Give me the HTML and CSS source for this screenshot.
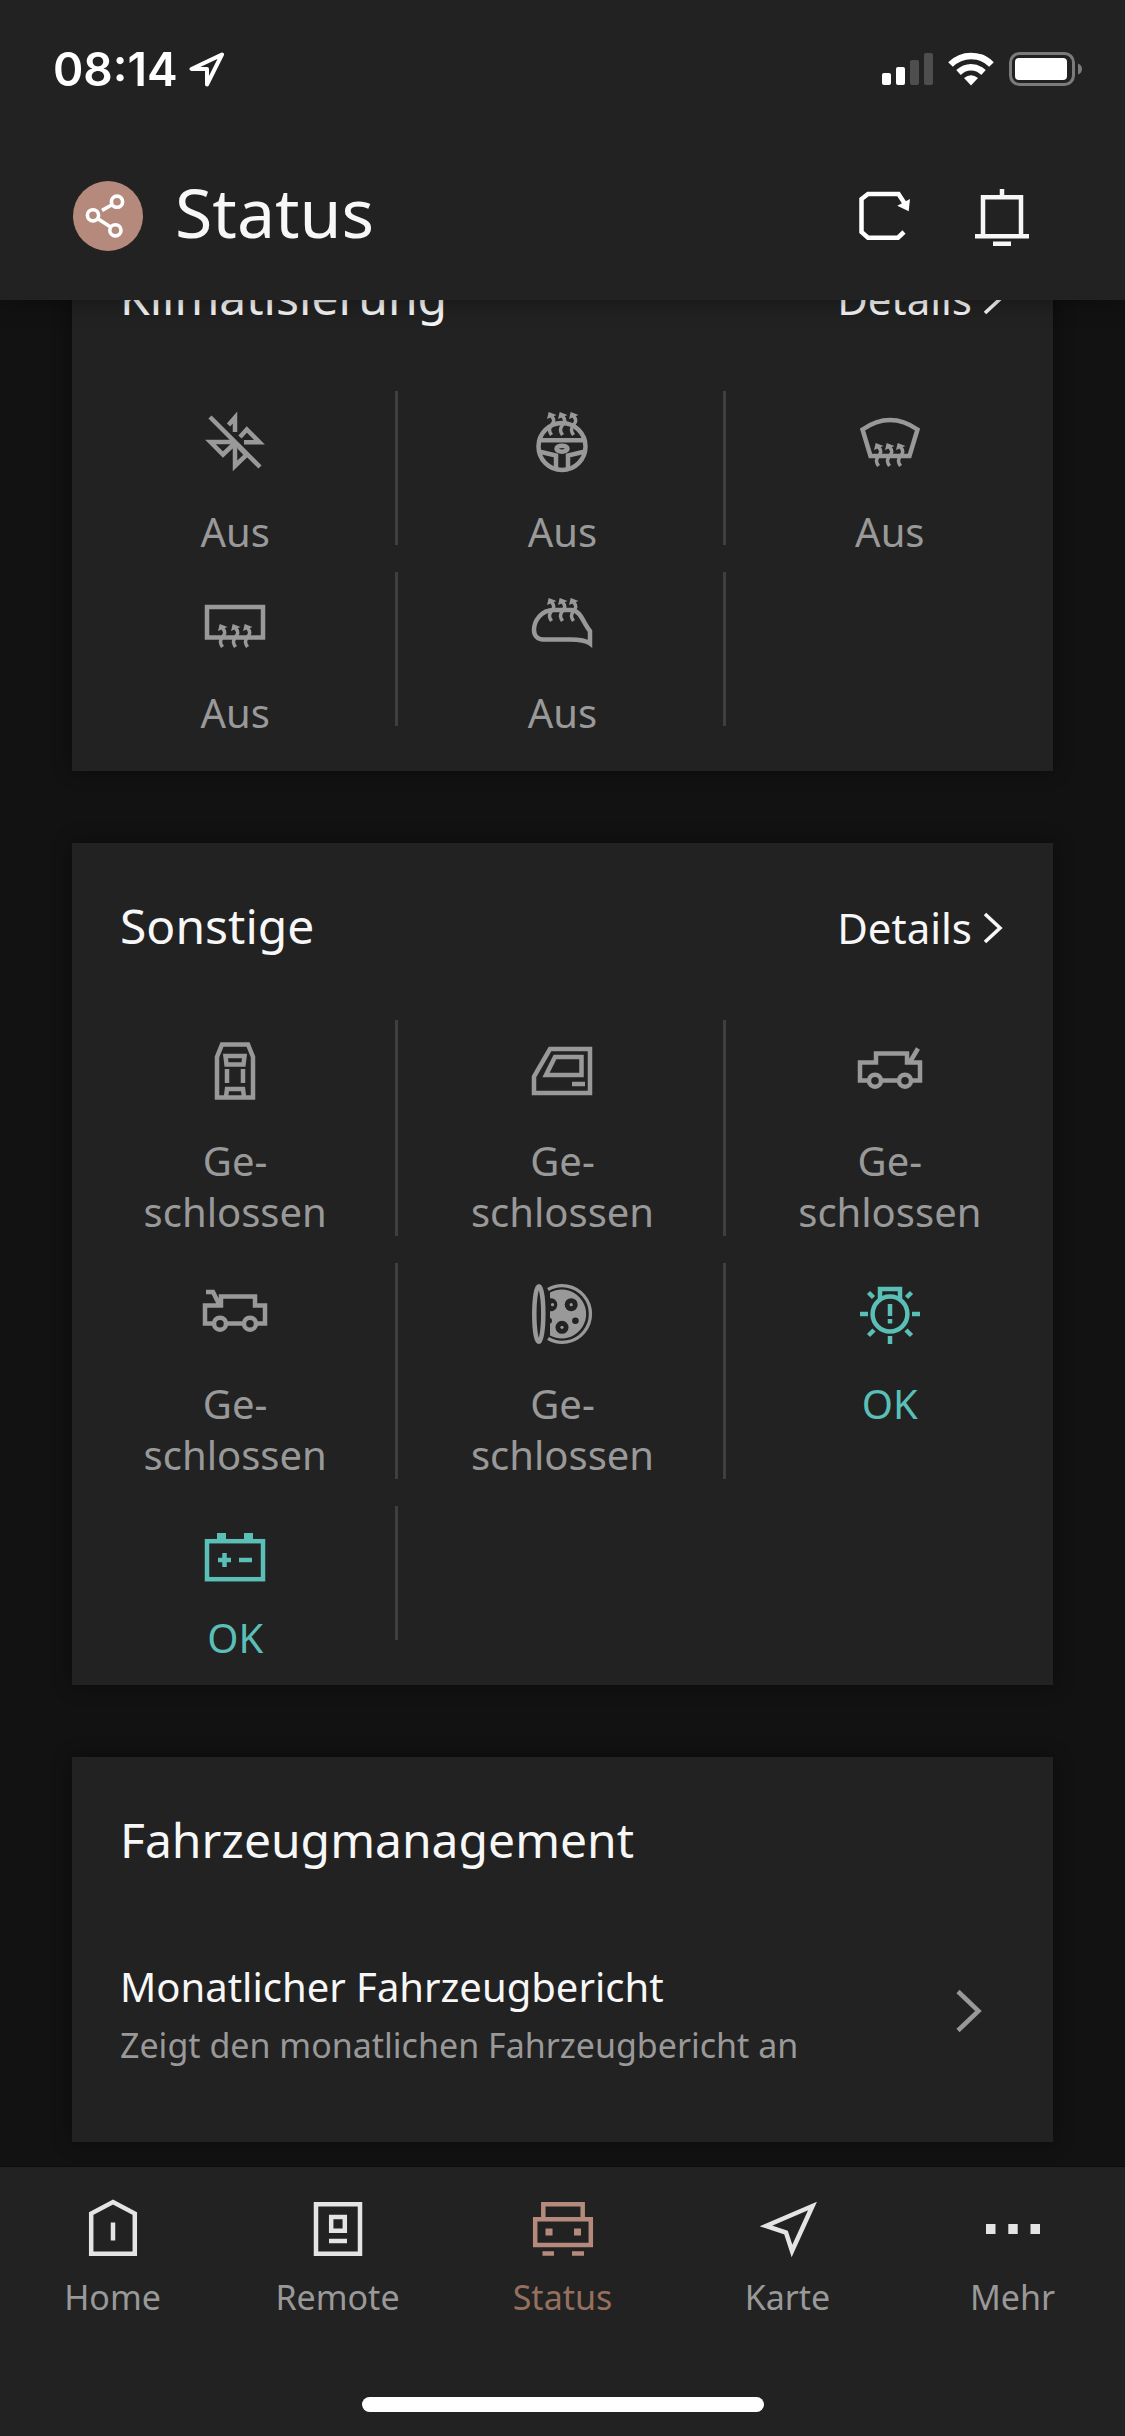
FILE: index.html
```html
<!DOCTYPE html>
<html lang="de">
<head>
  <meta charset="UTF-8">
  <meta name="viewport" content="width=device-width">
  <title>Status</title>
  <link rel="stylesheet" href="styles.css">
</head>
<body>
  <!-- shared shapes -->
  <svg class="defs" aria-hidden="true">
    <symbol id="heat" viewBox="0 0 10 23" overflow="visible">
      <path d="M1.7 0L9.5 3L0 7Z" fill="currentColor" stroke="none"/>
      <path d="M4.5 4C8 8 7 10 4.5 13C1.5 17 2 19 4.5 23" fill="none" stroke="currentColor" stroke-width="3.5"/>
    </symbol>
    <symbol id="chevron" viewBox="0 0 24 36">
      <path d="M4 4L19 18L4 32" fill="none" stroke="currentColor" stroke-width="3.6"/>
    </symbol>
  </svg>

  <header class="header">
    <div class="statusbar">
      <span class="time">08:14</span>
      <svg width="36" height="36" viewBox="0 0 36 36"><path d="M34 3.500L3.500 18H19V33.500Z" fill="none" stroke="#fff" stroke-width="4" stroke-linejoin="round"/></svg>
      <div class="indicators">
        <svg width="51" height="32" viewBox="0 0 51 32" fill="#fff">
          <rect y="20" width="9" height="12" rx="2"/>
          <rect x="14" y="14" width="9" height="18" rx="2"/>
          <rect x="28" y="7" width="9" height="25" rx="2" fill="#4e4e4e"/>
          <rect x="42" width="9" height="32" rx="2" fill="#4e4e4e"/>
        </svg>
        <svg width="46" height="34" viewBox="0 0 46 34">
          <path d="M2.500 12.500C14 1 32 1 43.500 12.500" fill="none" stroke="#fff" stroke-width="6.500"/>
          <path d="M10.500 20.500C18 13.500 28 13.500 35.500 20.500" fill="none" stroke="#fff" stroke-width="6.500"/>
          <path d="M16 26Q23 20.500 30 26L23 33.500Z" fill="#fff"/>
        </svg>
        <svg width="73" height="34" viewBox="0 0 73 34">
          <rect x="1.500" y="1.500" width="63" height="31" rx="9" fill="none" stroke="#7b7b7b" stroke-width="3"/>
          <rect x="6" y="6" width="52" height="22" rx="4" fill="#fff"/>
          <path d="M69 11.500Q73 13 73 17Q73 21 69 22.500Z" fill="#7b7b7b"/>
        </svg>
      </div>
    </div>
    <div class="titlebar">
      <button class="share" aria-label="Teilen">
        <svg width="70" height="70" viewBox="0 0 70 70" fill="none" stroke="#fff" stroke-width="3.600">
          <circle cx="44" cy="20.700" r="5.600"/>
          <circle cx="20" cy="34.300" r="5.600"/>
          <circle cx="42.400" cy="49.300" r="5.600"/>
          <path d="M29 29.300L39.500 23.500M24.500 37.500L38 46.300"/>
        </svg>
      </button>
      <h1>Status</h1>
      <button class="action" aria-label="Aktualisieren">
        <svg width="60" height="60" viewBox="0 0 60 60" fill="none" stroke="#fff" stroke-width="4.500">
          <path d="M49 46L43 51.700H13L6.500 46V13L13 8H43.500L50 18"/>
          <path d="M55 13L53.700 25.300L42.300 19.700Z" fill="#fff" stroke="none"/>
        </svg>
      </button>
      <button class="action" aria-label="Benachrichtigungen">
        <svg width="60" height="60" viewBox="0 0 60 60" fill="none" stroke="#f7f7f7" stroke-width="4.500">
          <path d="M30 3V10M11 50V11.300H49V50M3 50.300H57M21 57.700H39"/>
        </svg>
      </button>
    </div>
  </header>

  <main class="content">
    <section class="card">
      <div class="card-head">
        <h2>Klimatisierung</h2>
        <a class="details" href="#">Details <svg width="24" height="36"><use href="#chevron"/></svg></a>
      </div>
      <div class="tiles climate">
        <div class="tile">
          <svg class="icon" viewBox="0 0 60 60">
            <path d="M5 5L55 55M23.500 13L30 5.500V20M35 25L41.800 17.500L54.500 30.300H39M30 30H5.500L18 42.500L29 32M30 30V54L41.500 43L34 35"/>
          </svg>
          <span class="label">Aus</span>
        </div>
        <div class="tile">
          <svg class="icon" viewBox="0 0 60 60">
            <circle cx="30" cy="34.500" r="23.500"/>
            <path d="M7 28.300H53M7 39.500L24 43.500V57M53 39.500L36 43.500V57"/>
            <ellipse cx="30" cy="36.700" rx="5.500" ry="3"/>
            <use href="#heat" x="15" y="0" width="10" height="23"/>
            <use href="#heat" x="26" y="0" width="10" height="23"/>
            <use href="#heat" x="37" y="0" width="10" height="23"/>
          </svg>
          <span class="label">Aus</span>
        </div>
        <div class="tile">
          <svg class="icon" viewBox="0 0 60 60">
            <path d="M2.500 17.500Q30 -1.500 57.500 17.500L49.500 44H10.500Z"/>
            <use href="#heat" x="14" y="31" width="10" height="23"/>
            <use href="#heat" x="25" y="31" width="10" height="23"/>
            <use href="#heat" x="36" y="31" width="10" height="23"/>
          </svg>
          <span class="label">Aus</span>
        </div>
        <div class="tile">
          <svg class="icon" viewBox="0 0 60 60">
            <rect x="2" y="14" width="56" height="30.500"/>
            <use href="#heat" x="13" y="31" width="10" height="23"/>
            <use href="#heat" x="26" y="31" width="10" height="23"/>
            <use href="#heat" x="38" y="31" width="10" height="23"/>
          </svg>
          <span class="label">Aus</span>
        </div>
        <div class="tile">
          <svg class="icon" viewBox="0 0 60 60">
            <path d="M58 50.500V38C51 30 49 17 39 17H22C9 17 2 28 2 37C2 43 6 46.500 11 46.500H38C48 46.500 54 47.500 58 50.500Z"/>
            <use href="#heat" x="15" y="5" width="10" height="23"/>
            <use href="#heat" x="26" y="5" width="10" height="23"/>
            <use href="#heat" x="37" y="5" width="10" height="23"/>
          </svg>
          <span class="label">Aus</span>
        </div>
        <div class="tile"></div>
      </div>
    </section>

    <section class="card">
      <div class="card-head">
        <h2>Sonstige</h2>
        <a class="details" href="#">Details <svg width="24" height="36"><use href="#chevron"/></svg></a>
      </div>
      <div class="tiles other">
        <div class="tile">
          <svg class="icon" viewBox="0 0 60 60">
            <path d="M12 56.500V16L17 3.500H43L48 16V56.500ZM20.500 15H39.500L38.500 23.500H21.500ZM22 28V42M38 28V42M21 56L22 48H38L39 56"/>
          </svg>
          <span class="label">Ge&shy;schlossen</span>
        </div>
        <div class="tile">
          <svg class="icon" viewBox="0 0 60 60">
            <path d="M2 52V35.500L18 8H58V52ZM14 34L23 16H49.500V34ZM40 43H53"/>
          </svg>
          <span class="label">Ge&shy;schlossen</span>
        </div>
        <div class="tile">
          <svg class="icon" viewBox="0 0 60 60">
            <path d="M9 39.500H0V21.500H16V12.500H47V21.500H60V39.500H51M21 39.500H39M50 21L58 7.500"/>
            <circle cx="15" cy="39.700" r="6"/>
            <circle cx="45" cy="39.700" r="6"/>
          </svg>
          <span class="label">Ge&shy;schlossen</span>
        </div>
        <div class="tile">
          <svg class="icon" viewBox="0 0 60 60">
            <path d="M9 39.500H0V21.500H16V12.500H50V21.500H60V39.500H51M21 39.500H39M1 8H8L14.500 21"/>
            <circle cx="15" cy="39.700" r="6"/>
            <circle cx="45" cy="39.700" r="6"/>
          </svg>
          <span class="label">Ge&shy;schlossen</span>
        </div>
        <div class="tile">
          <svg class="icon" viewBox="0 0 60 60">
            <ellipse cx="6.800" cy="30" rx="4.500" ry="27.700"/>
            <path d="M16 5.500A28.300 28.300 0 1 1 16 54.500" stroke-width="3.300"/>
            <path d="M18 8.600A24.400 24.400 0 1 1 18 51.400Z" fill="currentColor" stroke="none"/>
            <g class="holes">
              <path d="M17 14.500A6.500 6.500 0 1 1 17 27Z"/>
              <circle cx="39.200" cy="20.700" r="6.500"/>
              <circle cx="30" cy="43.300" r="6.500"/>
              <circle cx="43.400" cy="36.700" r="3.300"/>
              <circle cx="17" cy="36.700" r="3"/>
            </g>
            <g fill="currentColor" stroke="none">
              <circle cx="20.500" cy="20.700" r="1.600"/>
              <circle cx="39.200" cy="20.700" r="1.600"/>
              <circle cx="30" cy="43.300" r="1.600"/>
            </g>
          </svg>
          <span class="label">Ge&shy;schlossen</span>
        </div>
        <div class="tile ok">
          <svg class="icon" viewBox="0 0 60 60">
            <circle cx="30" cy="30" r="17.400"/>
            <path d="M20 15V5H40V15M0 30H8M52 30H60M30 52V60M8.500 8.500L13.500 13.500M51.500 8.500L46.500 13.500M8.500 51.500L14 46M51.500 51.500L46 46M30 20V32M30 35V39.500"/>
          </svg>
          <span class="label">OK</span>
        </div>
        <div class="tile ok compact">
          <svg class="icon" viewBox="0 0 60 60">
            <rect x="2" y="14.200" width="56" height="38"/>
            <path d="M12 6H21V13H12ZM39 6H48V13H39Z" fill="currentColor" stroke="none"/>
            <path d="M13 33H26M19.500 26V40M34 33H47"/>
          </svg>
          <span class="label">OK</span>
        </div>
      </div>
    </section>

    <section class="card">
      <div class="card-head">
        <h2>Fahrzeugmanagement</h2>
      </div>
      <a class="report" href="#">
        <span class="report-text">
          <span class="report-title">Monatlicher Fahrzeugbericht</span>
          <span class="report-sub">Zeigt den monatlichen Fahrzeugbericht an</span>
        </span>
        <svg width="60" height="60" viewBox="0 0 60 60"><path d="M13 6.500L33.500 26L13 45.500" fill="none" stroke="currentColor" stroke-width="4.500"/></svg>
      </a>
    </section>
  </main>

  <nav class="tabbar">
    <div class="tabs">
      <a class="tab" href="#">
        <svg class="icon" viewBox="0 0 60 60"><path d="M8.200 54.700V14.500L30 3L51.800 14.500V54.700ZM30 23.500V41.500"/></svg>
        <span>Home</span>
      </a>
      <a class="tab" href="#">
        <svg class="icon" viewBox="0 0 60 60"><path d="M8 5.200H52V54.800H8ZM23.200 18H36.800V31.800H23.200ZM21 42H39"/></svg>
        <span>Remote</span>
      </a>
      <a class="tab active" href="#" aria-current="page">
        <svg class="icon" viewBox="0 0 60 60">
          <path d="M2.200 20.200H57.800V46H2.200ZM10.300 20V5.200H49.700V20M9.500 54.500H21M39 54.500H51"/>
          <path d="M12.500 29.500H19.500V36.500H12.500ZM41 29.500H48V36.500H41Z" fill="currentColor" stroke="none"/>
        </svg>
        <span>Status</span>
      </a>
      <a class="tab" href="#">
        <svg class="icon" viewBox="0 0 60 60"><path d="M54.500 7L8 27L28 33.500L34 52Z"/></svg>
        <span>Karte</span>
      </a>
      <a class="tab" href="#">
        <svg class="icon" viewBox="0 0 60 60"><path d="M3 25H12.500V35H3ZM25.300 25H34.700V35H25.300ZM47.500 25H57V35H47.500Z" fill="currentColor" stroke="none"/></svg>
        <span>Mehr</span>
      </a>
    </div>
    <div class="home-indicator"></div>
  </nav>
</body>
</html>
```

FILE: styles.css
```css
* {
  box-sizing: border-box;
}
body {
  margin: 0;
  background-color: #121212;
  color: #f7f7f7;
  font-family: "Noto Sans", sans-serif;
}
a {
  color: inherit;
  text-decoration: none;
}
button {
  padding: 0;
  border: none;
  background: none;
  cursor: pointer;
}
svg {
  display: block;
  flex-shrink: 0;
}
h1, h2 {
  margin: 0;
  font-weight: 400;
}
.defs {
  position: absolute;
  width: 0;
  height: 0;
}

/* header */
.header {
  position: fixed;
  top: 0;
  left: 0;
  right: 0;
  z-index: 2;
  background-color: #222;
  box-shadow: 0 0 24px rgba(0, 0, 0, 0.4);
}
.statusbar {
  display: flex;
  align-items: center;
  gap: 10px;
  padding: 42px 43px 0 53px;
}
.time {
  font-family: Inter, sans-serif;
  font-size: 46px;
  font-weight: 600;
  line-height: 54px;
  color: #fff;
}
.indicators {
  display: flex;
  align-items: center;
  gap: 15px;
  margin-left: auto;
}
.titlebar {
  display: flex;
  align-items: center;
  padding: 85px 93px 49px 73px;
}
.titlebar h1 {
  flex: 1;
  padding: 0 0 8px 32px;
  font-size: 68px;
  line-height: 62px;
}
.share {
  border-radius: 50%;
  background-color: #b5897b;
}
.action + .action {
  margin-left: 57px;
}

/* cards */
.content {
  padding: 214px 72px 270px;
}
.card {
  margin-bottom: 72px;
  background-color: #222;
  box-shadow: 0 0 18px rgba(0, 0, 0, 0.4);
}
.card-head {
  display: flex;
  justify-content: space-between;
  align-items: flex-start;
  padding: 53px 48px 0;
}
.card-head h2 {
  font-size: 48px;
  line-height: 60px;
}
.details {
  display: flex;
  align-items: center;
  gap: 9px;
  margin-bottom: -4px;
  font-size: 42px;
  line-height: 64px;
}
.tiles {
  display: grid;
  grid-template-columns: repeat(3, 1fr);
  gap: 27px 1px;
  padding: 64px 0 45px;
}
.climate {
  grid-auto-rows: 154px;
}
.other {
  grid-template-rows: 216px 216px 134px;
}
.tile {
  display: flex;
  flex-direction: column;
  align-items: center;
  gap: 34px;
  padding: 21px 0 0 3px;
  border-right: 3px solid #3f3f3f;
  color: #999;
}
.tile:nth-child(3n) {
  border-color: transparent;
}
.icon {
  width: 60px;
  height: 60px;
  overflow: visible;
  fill: none;
  stroke: currentColor;
  stroke-width: 4.5px;
}
.holes {
  fill: #222;
  stroke: none;
}
.label {
  max-width: 200px;
  font-size: 40px;
  line-height: 51px;
  text-align: center;
}
.ok {
  color: #5abfb7;
}
.compact {
  gap: 25px;
}

/* report row */
.report {
  display: flex;
  align-items: center;
  justify-content: space-between;
  padding: 91px 48px 74px;
  color: #999;
}
.report-text {
  display: flex;
  flex-direction: column;
  gap: 10px;
}
.report-title {
  font-size: 40px;
  line-height: 51px;
  color: #f7f7f7;
}
.report-sub {
  font-size: 34px;
  line-height: 46px;
}

/* bottom navigation */
.tabbar {
  position: fixed;
  left: 0;
  right: 0;
  bottom: 0;
  z-index: 2;
  padding: 32px 0 24px;
  border-top: 1px solid #0c0c0c;
  background-color: #222;
}
.tabs {
  display: flex;
  margin-bottom: 77px;
}
.tab {
  flex: 1;
  display: flex;
  flex-direction: column;
  align-items: center;
  gap: 15px;
  font-size: 34px;
  line-height: 46px;
  color: #999;
}
.tab .icon {
  color: #e4e4e4;
}
.tab.active {
  color: #95705f;
}
.tab.active .icon {
  color: #b5897b;
}
.home-indicator {
  width: 402px;
  height: 15px;
  margin: 0 auto;
  border-radius: 8px;
  background-color: #fff;
}
```
